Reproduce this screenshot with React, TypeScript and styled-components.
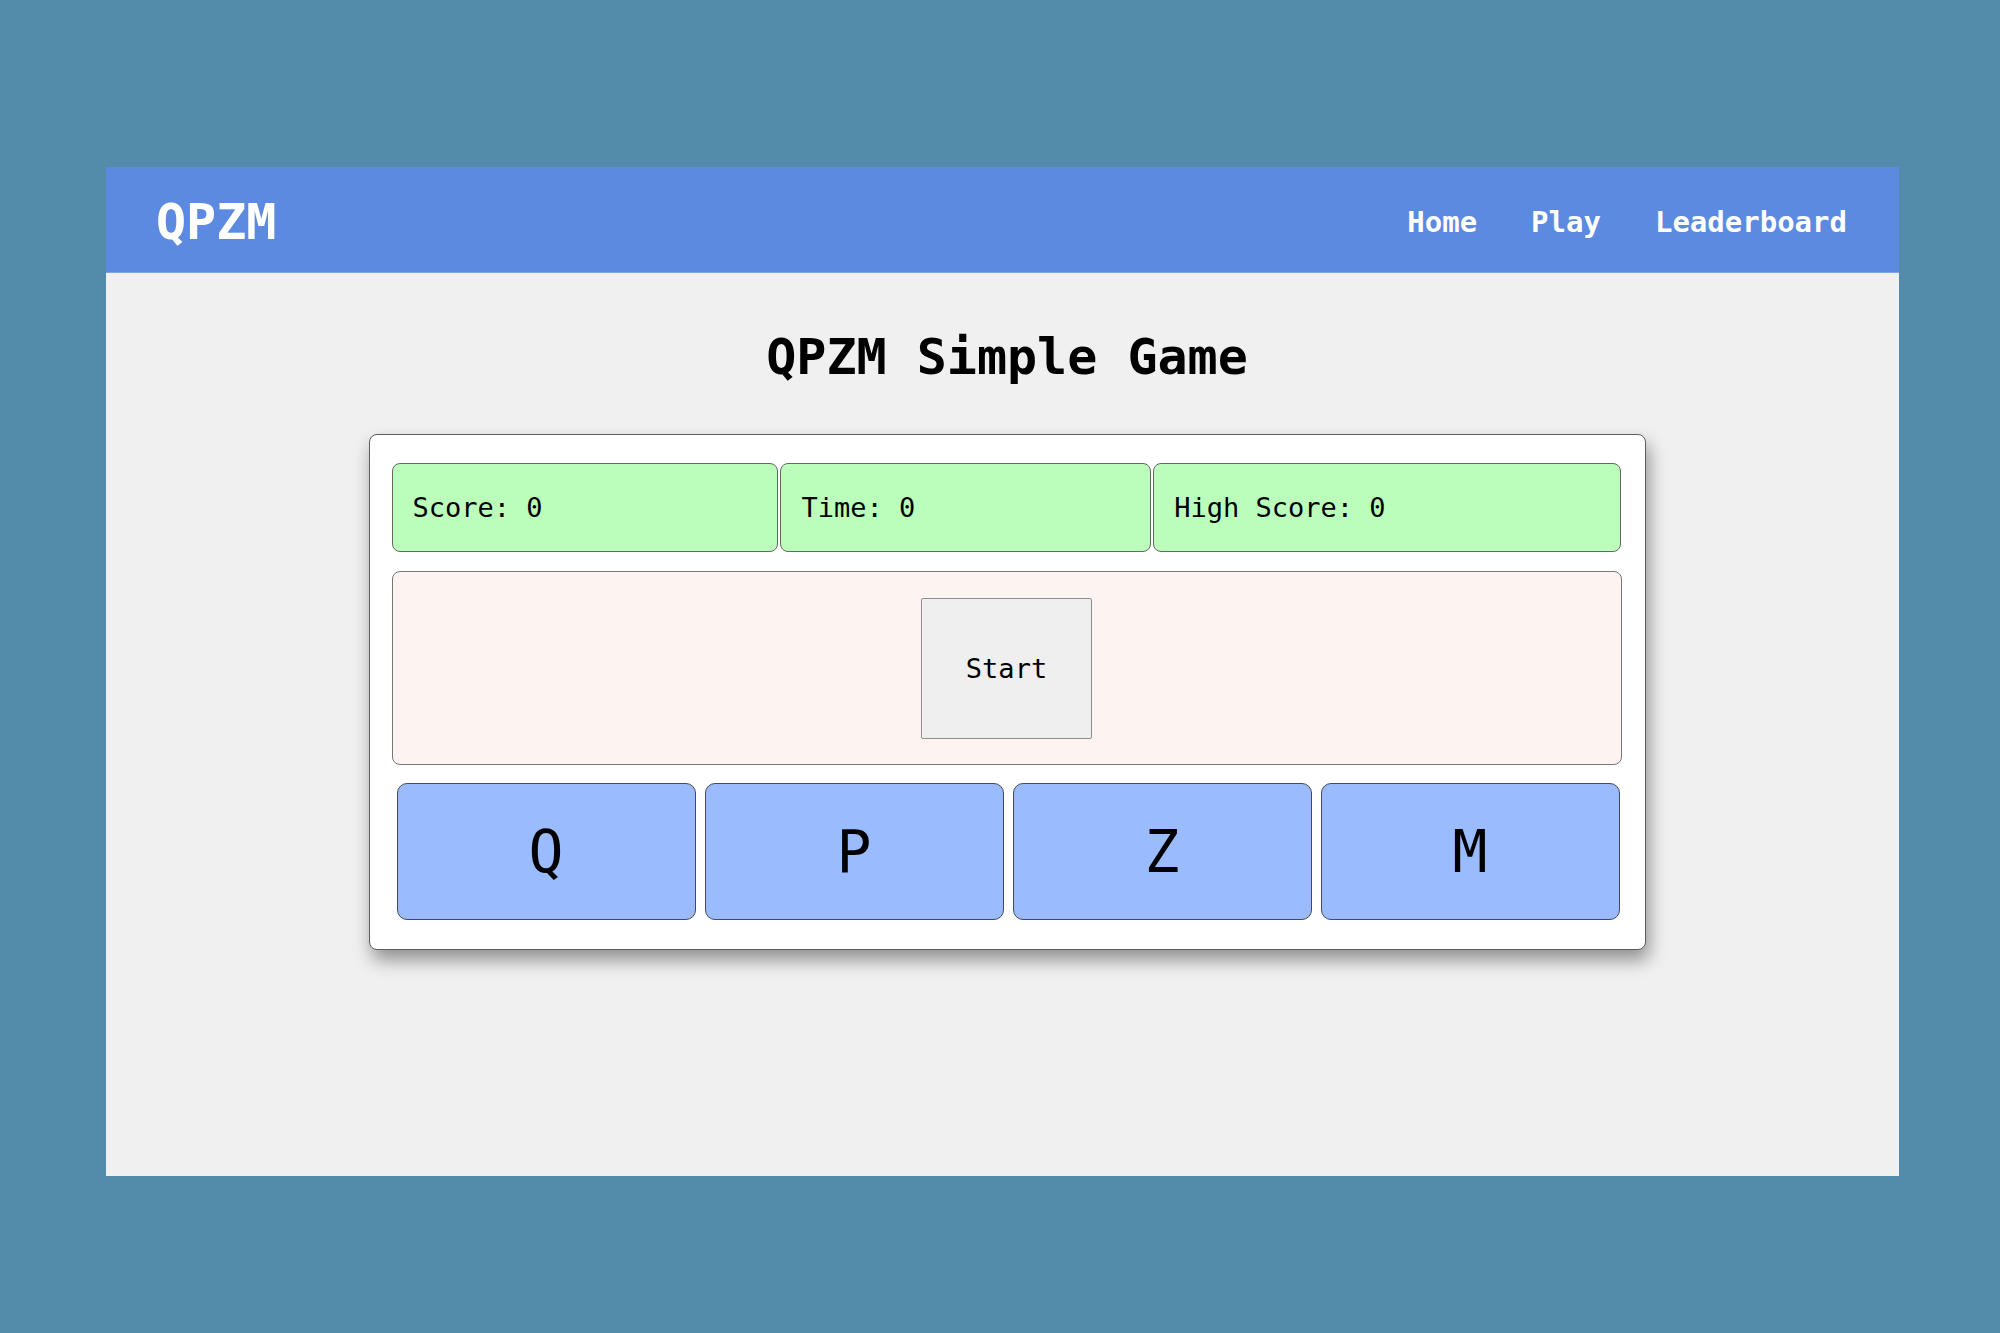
import React, {useState} from 'react';
import styled, {createGlobalStyle} from 'styled-components';

const GlobalStyle = createGlobalStyle`
    html, body {
        margin: 0;
        padding: 0;
        background: #538caa;
        font-family: "DejaVu Sans Mono", "Liberation Mono", monospace;
    }
`;

const Page = styled.div`
    width: 2000px;
    height: 1333px;
    padding: 167px 0 0 106px;
    box-sizing: border-box;
`;

const Frame = styled.div`
    width: 1793px;
    height: 1009px;
    background: #f0f0f0;
    display: flex;
    flex-direction: column;
`;

const Header = styled.header`
    height: 106px;
    flex-shrink: 0;
    background: #5b8ae0;
    border-bottom: 1px solid #7fa6e8;
    box-sizing: border-box;
    display: flex;
    align-items: center;
    justify-content: space-between;
    padding: 0 52px 0 50px;
`;

const Logo = styled.div`
    color: #ffffff;
    font-size: 50px;
    font-weight: bold;
    line-height: 60px;
    margin-top: 4px;
`;

const Nav = styled.nav`
    display: flex;
    gap: 54px;
    margin-top: 4px;
`;

const NavLink = styled.a`
    color: #ffffff;
    font-size: 29px;
    font-weight: bold;
    line-height: 34px;
    text-decoration: none;
    cursor: pointer;
`;

const Main = styled.main`
    display: flex;
    flex-direction: column;
    align-items: center;
    padding-left: 9px;
`;

const Title = styled.h1`
    margin: 55px 0 0;
    font-size: 50px;
    font-weight: bold;
    line-height: 58px;
    color: #000;
`;

const Card = styled.div`
    margin-top: 48px;
    width: 1277px;
    box-sizing: border-box;
    background: #ffffff;
    border: 1.5px solid #5e5e5e;
    border-radius: 8px;
    box-shadow: 3px 10px 18px rgba(0, 0, 0, 0.4);
    padding: 28px 23px 29px 22px;
    display: flex;
    flex-direction: column;
`;

const StatsRow = styled.div`
    display: flex;
    gap: 2px;
`;

const Stat = styled.div`
    flex: 1 1 auto;
    height: 89px;
    box-sizing: border-box;
    background: #bbfdbb;
    border: 1.5px solid #666;
    border-radius: 8px;
    padding: 0 20px;
    display: flex;
    align-items: center;
    font-size: 27px;
    color: #000;
    white-space: pre;
`;

const GameArea = styled.div`
    margin-top: 19px;
    height: 194px;
    box-sizing: border-box;
    background: #fdf4f1;
    border: 1.5px solid #777;
    border-radius: 8px;
    display: flex;
    align-items: center;
    justify-content: center;
`;

const StartButton = styled.button`
    width: 171px;
    height: 141px;
    background: #efefef;
    border: 1px solid #8e8e8e;
    border-radius: 2px;
    font-family: "DejaVu Sans Mono", monospace;
    font-size: 27px;
    color: #000;
    cursor: pointer;
`;

const Keys = styled.div`
    margin-top: 18px;
    display: grid;
    grid-template-columns: repeat(4, 1fr);
    gap: 9px;
    padding: 0 2px 0 5px;
`;

const Key = styled.button`
    height: 137px;
    background: #9abbfd;
    border: 1.5px solid #454a55;
    border-radius: 10px;
    font-family: "DejaVu Sans Mono", monospace;
    font-size: 58px;
    color: #000;
    cursor: pointer;
`;

const App = () => {
    const [score] = useState(0);
    const [time] = useState(0);
    const [high] = useState(0);

    return (
        <Page>
            <GlobalStyle />
            <Frame>
                <Header>
                    <Logo>QPZM</Logo>
                    <Nav>
                        <NavLink>Home</NavLink>
                        <NavLink>Play</NavLink>
                        <NavLink>Leaderboard</NavLink>
                    </Nav>
                </Header>
                <Main>
                    <Title>QPZM Simple Game</Title>
                    <Card>
                        <StatsRow>
                            <Stat>Score: {score}</Stat>
                            <Stat>Time: {time}</Stat>
                            <Stat>High Score: {high}</Stat>
                        </StatsRow>
                        <GameArea>
                            <StartButton>Start</StartButton>
                        </GameArea>
                        <Keys>
                            {['Q', 'P', 'Z', 'M'].map((k) => (
                                <Key key={k}>{k}</Key>
                            ))}
                        </Keys>
                    </Card>
                </Main>
            </Frame>
        </Page>
    );
};

export default App;
